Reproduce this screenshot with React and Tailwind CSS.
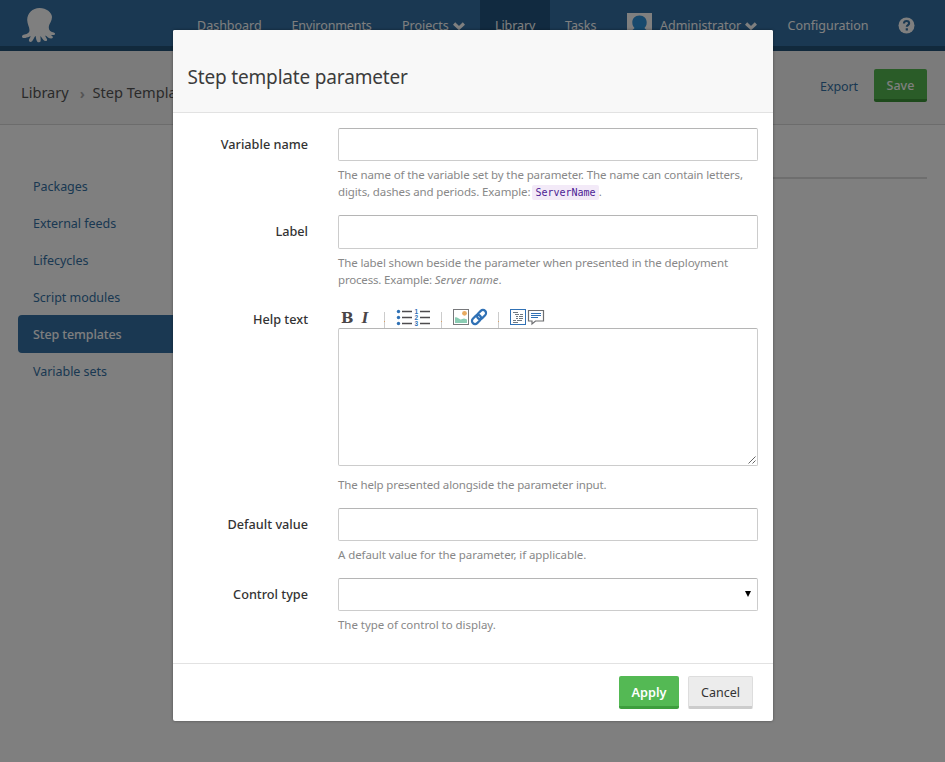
import React from "react";

function Octopus() {
  return (
    <svg width="34" height="35" viewBox="0 0 34 35" className="block" fill="#fff">
      <path d="M17.500 0C10.500 0 5.200 5 5.200 12c0 4 2.300 7 2.300 10.300 0 2.700-1.900 3.500-5 4.300-1.500.4-2.500.8-2.500 1.900 0 1.700 2 1.600 3.400 1.400 1.700-.2 3.300-.9 5.200-1.800-.1 1.700-1.700 2.800-1.700 4.500 0 1.400 2 1.800 3.200.6 1.400-1.400 1.700-3.300 3.400-5.400.5 1.700.5 3.800 1.600 5.600.7 1.100 2.900 1.300 3.400.1.600-1.600-.2-3.600 0-5.400 1.300 1.500 2.200 3.600 3.900 4.600 1.400.8 3 .2 2.700-1.300-.4-1.500-1.700-2.500-1.900-4 2 .9 3.500 3.100 5.900 3.200 1.900 0 2.200-1.500 1.300-2.300-.8-.7-1.400-.9-1.300-1.300 1.500 0 3.700.5 4-.9.300-1.500-1.700-1.600-3.200-2.100-2.600-.9-3.500-3-3-5.900.4-2.400 3.100-5.200 3.100-9.200C29.800 4.500 24.500 0 17.500 0Z" />
    </svg>
  );
}

function Chevron() {
  return (
    <svg width="12" height="9" viewBox="0 0 12 9" className="ml-[4px] mt-[2px]" fill="none" stroke="#fff" strokeWidth="3.200">
      <path d="M1.100 1.500l4.900 4.600 4.900-4.600" />
    </svg>
  );
}

const sideItems = ["Packages", "External feeds", "Lifecycles", "Script modules", "Step templates", "Variable sets"];

function Page() {
  return (
    <div className="h-[762px] w-[945px] overflow-hidden bg-white">
      <div className="flex h-[51px] border-b-[5px] border-[#225379] bg-[#3471a4] text-[12.500px] text-white">
        <div className="w-[182px] pl-[22px] pt-2"><Octopus /></div>
        <div className="flex h-[46px] leading-[19px] [&>*]:pt-4">
          <div className="w-[95px] pl-[15px]">Dashboard</div>
          <div className="w-[110px] pl-[14.500px] tracking-[-0.100px]">Environments</div>
          <div className="flex w-[93px] items-start pl-[15px]"><span>Projects</span><span className="pt-[4px]"><Chevron /></span></div>
          <div className="w-[70px] bg-[#225580] pl-[15px] tracking-[-0.100px]">Library</div>
          <div className="w-[62px] pl-[15px] tracking-[-0.050px]">Tasks</div>
          <div className="flex w-[161px] items-start pl-[15px]">
            <svg width="25" height="25" viewBox="0 0 25 25" className="-mt-[3px] mr-2">
              <path d="M0 0h25v25H0z" fill="#fff" />
              <path d="M12.500 2.500c-4.500 0-7.200 3-7.200 7 0 3 1.200 4.300 2.200 5.500-.5 1.500-4.500 2-5 10h20c-.5-8-4.500-8.500-5-10 1-1.200 2.200-2.500 2.200-5.500 0-4-2.700-7-7.200-7Z" fill="#2f93da" />
            </svg>
            <span>Administrator</span><span className="pt-[4px]"><Chevron /></span>
          </div>
          <div className="w-[125px] pl-[14.500px]">Configuration</div>
          <div>
            <svg width="17" height="17" viewBox="0 0 17 17" className="mt-[1px]">
              <circle cx="8.500" cy="8.500" r="8" fill="#fff" />
              <path d="M6 6.500c0-1.700 1.100-2.500 2.500-2.500s2.600.9 2.600 2.300c0 1.800-2.300 1.700-2.300 3.500M8.800 11.300v2.100" fill="none" stroke="#3471a4" strokeWidth="2.200" />
            </svg>
          </div>
        </div>
      </div>
      <div className="flex h-[74px] border-b border-[#d8d8d8] bg-[#f7f7f7]">
        <div className="flex flex-1 items-center pl-[21px] pt-[11px] text-[14.600px] text-[#555]">
          <span>Library</span><span className="ml-[11px] mr-[7.500px] text-[14px] font-bold text-[#aaa]">›</span><span>Step Templates</span>
        </div>
        <div className="flex pr-[18px] pt-[18px] text-[12.500px]">
          <span className="mr-4 leading-[35px] tracking-[-0.100px] text-[#3471a4]">Export</span>
          <span className="h-[33px] w-[53px] rounded-[2px] border-b-[3px] border-[#3d9539] bg-[#54b850] text-center font-medium leading-[33px] text-white">Save</span>
        </div>
      </div>
      <div className="flex">
        <div className="ml-[18px] mt-[43px] w-[200px] text-[12.500px] tracking-[-0.030px]">
          {sideItems.map((s) => (
            <div key={s} className={s === "Step templates" ? "-mt-px h-[38px] rounded-[4px] bg-[#3471a4] pl-[15px] font-medium leading-[39px] tracking-[-0.100px] text-white" : "h-[37px] pl-[15px] leading-[37px] text-[#3471a4]"}>{s}</div>
          ))}
        </div>
        <div className="ml-5 mr-[18px] mt-[52px] h-[2px] flex-1 bg-[#dcdcdc]" />
      </div>
    </div>
  );
}

const box = "w-[420px] rounded-[2px] border border-[#ccc] border-t-[#b5b5b5] bg-white";

function Row({ label, height, help, children, gap = "pt-[5px]" }) {
  return (
    <div className={"flex " + height}>
      <div className="mr-[30px] w-[135px] text-right text-[12.700px] font-medium leading-[33px] text-[#333]">{label}</div>
      <div className="w-[420px]">
        {children}
        <p className={"whitespace-nowrap text-[11.500px] leading-[17px] tracking-[-0.120px] text-[#888] " + gap}>{help}</p>
      </div>
    </div>
  );
}

function Toolbar() {
  return (
    <svg width="220" height="25" viewBox="338 303 220 25" className="block">
      <g fill="#4a4548" fontFamily="'DejaVu Serif', serif">
        <text x="341" y="323" fontWeight="700" fontSize="15.500" textLength="12.500" lengthAdjust="spacingAndGlyphs">B</text>
        <text x="361.500" y="323" fontFamily="'Liberation Serif', serif" fontStyle="italic" fontWeight="700" fontSize="17.500">I</text>
      </g>
      <path d="M384.500 312v16M441.500 312v16M498.500 312v16" stroke="#ccc" />
      <path d="M384 321.500h1M441 321.500h1M498 321.500h1" stroke="#d9a066" />
      <g fill="#3071b5">
        <circle cx="398.500" cy="311.500" r="1.700" /><circle cx="398.500" cy="317.500" r="1.700" /><circle cx="398.500" cy="323.500" r="1.700" />
      </g>
      <path d="M402 311.500h10M402 317.500h10M402 323.500h10M420 311.500h10M420 317.500h10M420 323.500h10" stroke="#4d4b4e" strokeWidth="1.300" />
      <g fill="#3071b5" fontFamily="'Liberation Sans', sans-serif" fontSize="6.500" fontWeight="700">
        <text x="414.500" y="313.500">1</text><text x="414.500" y="319.500">2</text><text x="414.500" y="325.500">3</text>
      </g>
      <rect x="453.500" y="309.500" width="15" height="15" fill="#fff" stroke="#77787b" />
      <path d="M455 317.500c2-.8 3 .8 5 1.700 1.500.7 2.500-.7 4-.7s2 .8 3 1v3.500h-12z" fill="#8accb3" />
      <circle cx="464.500" cy="313.300" r="2.400" fill="#e8ab61" />
      <g fill="none" stroke="#3071b5" strokeWidth="2.200" transform="rotate(-45 479 317)">
        <rect x="470.300" y="313.900" width="10.300" height="6.200" rx="3.100" />
        <rect x="477.400" y="313.900" width="10.300" height="6.200" rx="3.100" />
      </g>
      <rect x="510.500" y="309.500" width="15" height="15" fill="#fff" stroke="#3071b5" />
      <path d="M513 312.500h5M515 314.500h4M520 314.500h3M516 316.500h2M519 316.500h4M516 318.500h2M519 318.500h4M513 320.500h3M517 320.500h5M513 322.500h5" stroke="#6f7880" />
      <path d="M528.500 310.500h15v10.500h-8l-3.500 3v-3h-3.500z" fill="#fff" stroke="#6d6e71" strokeWidth="1.200" />
      <path d="M531 313.500h10M531 315.500h10M531 317.500h7" stroke="#3071b5" />
    </svg>
  );
}

function Modal() {
  return (
    <div className="h-[691px] w-[600px] overflow-hidden rounded-[2px] bg-white shadow-[0_0_3px_rgba(0,0,0,0.400)]">
      <div className="h-[83px] border-b border-[#e2e2e2] bg-[#f8f8f8] pl-[14.500px] pt-[32px] text-[19px] leading-[30px] tracking-[-0.170px] text-[#3c3c3c]">Step template parameter</div>
      <div className="h-[551px] border-b border-[#e2e2e2] pt-[15px]">
        <Row label="Variable name" height="h-[87px]" help={<>The name of the variable set by the parameter. The name can contain letters,<br />digits, dashes and periods. Example:<code className="ml-[2px] rounded-[2px] bg-[#f3eaf8] px-[3px] py-[2px] font-['DejaVu_Sans_Mono',monospace] text-[10px] tracking-[0] text-[#4b1b94]">ServerName</code>.</>}>
          <div className={box + " h-[33px]"} />
        </Row>
        <Row label="Label" height="h-[88px]" help={<><span className="tracking-[-0.130px]">The label shown beside the parameter when presented in the deployment</span><br /><span className="tracking-[-0.180px]">process. Example: </span><i className="tracking-[0]">Server name</i>.</>}>
          <div className={box + " h-[34px]"} />
        </Row>
        <Row label="Help text" height="h-[205px]" gap="pt-[10px]" help={<span className="tracking-[-0.140px]">The help presented alongside the parameter input.</span>}>
          <Toolbar />
          <div className={box + " flex h-[138px] items-end justify-end"}>
            <svg width="9" height="9" viewBox="0 0 9 9"><path d="M.5 7.500l7-7M4.500 7.500l3-3" stroke="#555" strokeWidth="0.900" /></svg>
          </div>
        </Row>
        <Row label="Default value" height="h-[70px]" help={<span className="tracking-[-0.080px]">A default value for the parameter, if applicable.</span>}>
          <div className={box + " h-[33px]"} />
        </Row>
        <Row label="Control type" height="h-[70px]" help={<span className="tracking-[-0.050px]">The type of control to display.</span>}>
          <div className={box + " flex h-[33px] items-center justify-end pr-[6px]"}>
            <svg width="6" height="6" viewBox="0 0 6 6" className="-mt-px"><path d="M0 0h6L3 6z" /></svg>
          </div>
        </Row>
      </div>
      <div className="flex justify-end pr-5 pt-3 text-[12.700px]">
        <div className="h-[33px] w-[60px] rounded-[2px] border-b-[3px] border-[#3d9e3d] bg-[#54b954] text-center font-semibold leading-[32px] text-white">Apply</div>
        <div className="ml-[9px] h-[33px] w-[65px] rounded-[2px] border border-b-[3px] border-[#ddd] border-b-[#ccc] bg-[#ececec] text-center text-[12.500px] leading-[31px] text-[#333]">Cancel</div>
      </div>
    </div>
  );
}

export default function App() {
  return (
    <div className="relative h-[762px] w-[945px] overflow-hidden font-['Noto_Sans',sans-serif]">
      <Page />
      <div className="absolute inset-0 bg-black/50 pl-[173px] pt-[30px]">
        <Modal />
      </div>
    </div>
  );
}
